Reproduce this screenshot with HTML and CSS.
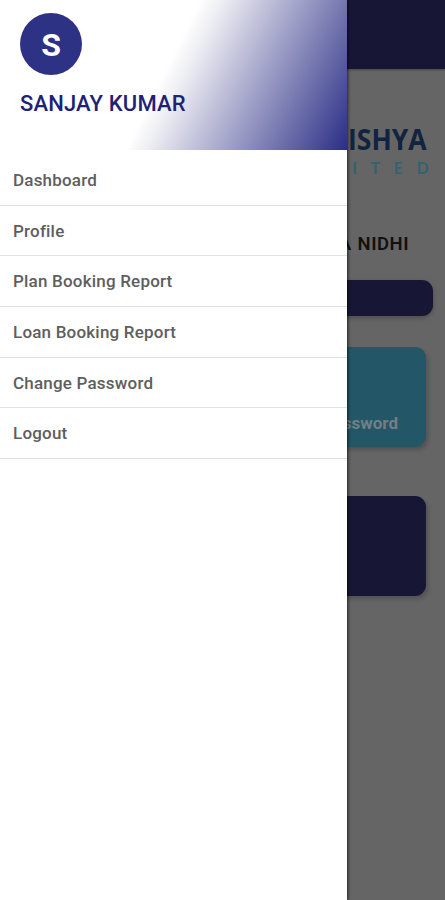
FILE: index.html
```html
<!DOCTYPE html>
<html lang="en">
<head>
<meta charset="utf-8">
<meta name="viewport" content="width=device-width, initial-scale=1">
<title>Dashboard</title>
<link rel="stylesheet" href="styles.css">
</head>
<body>
<main class="page">
  <header class="appbar"></header>
  <div class="brand">
    <div class="brand-name">ISHYA</div>
    <div class="brand-sub">ITED</div>
  </div>
  <h1 class="title">A NIDHI</h1>
  <div class="banner"></div>
  <div class="card card-teal"><span class="card-label">ssword</span></div>
  <div class="card card-navy"></div>
</main>
<aside class="drawer">
  <div class="profile">
    <div class="avatar">S</div>
    <div class="user">SANJAY KUMAR</div>
  </div>
  <nav class="menu">
    <a class="item">Dashboard</a>
    <a class="item">Profile</a>
    <a class="item">Plan Booking Report</a>
    <a class="item">Loan Booking Report</a>
    <a class="item">Change Password</a>
    <a class="item">Logout</a>
  </nav>
</aside>
</body>
</html>
```
FILE: styles.css
```css
* { box-sizing: border-box; }
body {
  margin: 0;
  height: 900px;
  overflow: hidden;
  position: relative;
  font-family: Roboto, "Liberation Sans", sans-serif;
}
.page {
  height: 900px;
  background: #656565;
  display: flex;
  flex-direction: column;
  align-items: flex-end;
}
.appbar {
  width: 100%;
  height: 69px;
  background: #171735;
  box-shadow: 0 1px 2px rgba(0, 0, 0, .3);
}
.brand {
  height: 111px;
  margin-top: 53px;
  width: 98px;
  padding-left: 1px;
}
.brand-name {
  font: 700 29px/34px "Open Sans", "Noto Sans", sans-serif;
  color: #10233f;
  transform: scaleX(.915);
  transform-origin: left;
}
.brand-sub {
  font: 600 17px/22px "Open Sans", "Noto Sans", sans-serif;
  color: #2e6371;
  letter-spacing: 13.4px;
  padding-left: 4px;
  margin-top: 1px;
  white-space: nowrap;
}
.title {
  margin: 0 36px 0 0;
  font-size: 18.5px;
  font-weight: 600;
  line-height: 22px;
  letter-spacing: .5px;
  word-spacing: 1px;
  color: #111;
}
.banner {
  width: 421px;
  height: 36px;
  margin: 25px 12px 0 0;
  border-radius: 11px;
  background: #171735;
  box-shadow: 0 2px 4px rgba(0, 0, 0, .25);
}
.card {
  width: 190px;
  height: 100px;
  margin-right: 19px;
  border-radius: 11px;
  display: flex;
  align-items: flex-end;
  justify-content: flex-end;
  box-shadow: 2px 3px 4px rgba(0, 0, 0, .2);
}
.card-teal { margin-top: 31px; background: #235767; }
.card-navy { margin-top: 49px; background: #171735; }
.card-label {
  font-size: 17px;
  font-weight: 700;
  line-height: 22px;
  color: #727f84;
  margin: 0 28px 13px 0;
}
.drawer {
  position: absolute;
  left: 0;
  top: 0;
  width: 347px;
  height: 900px;
  background: #fff;
  box-shadow: 1px 0 3px rgba(0, 0, 0, .65);
}
.profile {
  height: 150px;
  padding: 13px 0 0 20px;
  background: linear-gradient(116.6deg, #fff 47.5%, #f0f0f5 52%, #2b2e86 100%);
}
.avatar {
  width: 62px;
  height: 62px;
  border-radius: 50%;
  background: #2e3284;
  color: #fff;
  font-size: 32px;
  font-weight: 700;
  line-height: 64px;
  text-align: center;
}
.user {
  margin-top: 16px;
  font-size: 22px;
  font-weight: 500;
  line-height: 26px;
  letter-spacing: .15px;
  color: #211f78;
  white-space: nowrap;
}
.menu { padding-top: 5px; }
.item {
  display: flex;
  align-items: center;
  height: 50.7px;
  padding-left: 13px;
  border-bottom: 1px solid #e2e2e2;
  font-size: 17px;
  font-weight: 500;
  letter-spacing: .2px;
  color: #5e5e5e;
}
```
